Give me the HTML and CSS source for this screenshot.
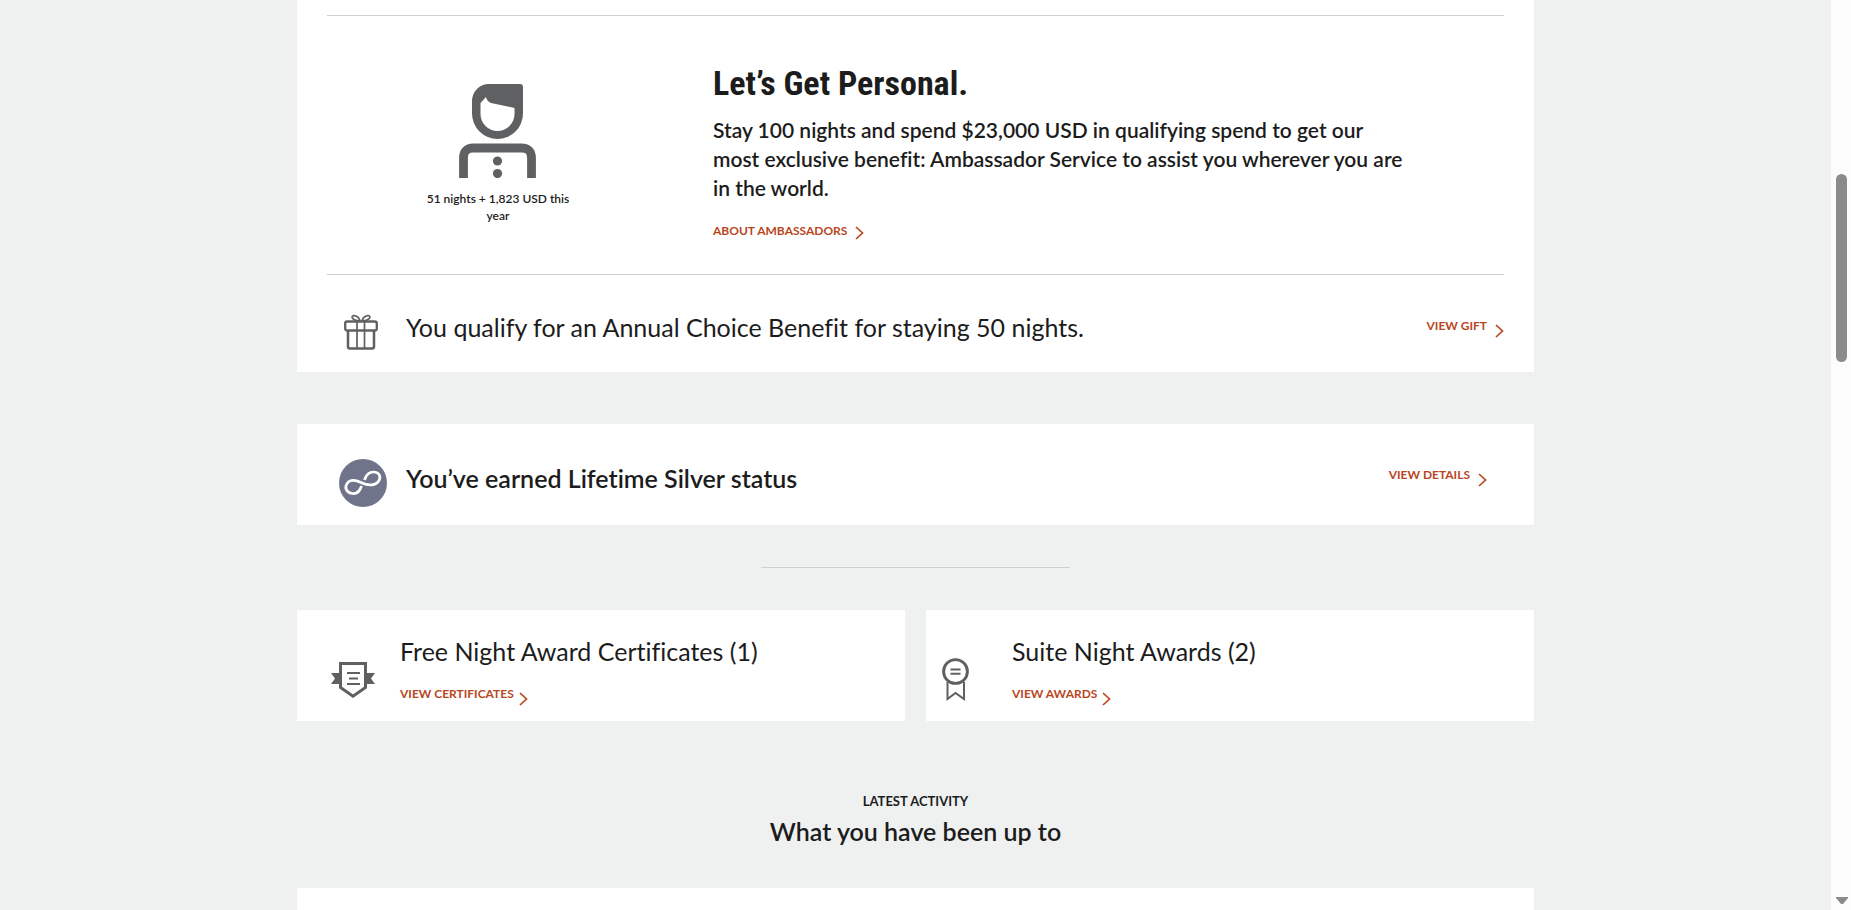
FILE: index.html
```html
<!DOCTYPE html>
<html lang="en">
<head>
<meta charset="utf-8">
<meta name="viewport" content="width=device-width, initial-scale=1">
<title>Member benefits</title>
<link rel="stylesheet" href="styles.css">
</head>
<body>
<svg class="sprite" aria-hidden="true">
  <symbol id="chevron" viewBox="0 0 9 14"><path d="M1 1l6.500 6L1 13" fill="none" stroke="currentColor" stroke-width="1.700"/></symbol>
</svg>
<div class="screen">
  <main class="page">
    <section class="card benefits">
      <div class="ambassador">
        <div class="progress">
          <svg class="person" viewBox="0 0 78 94" aria-hidden="true">
            <path fill="#5f6062" fill-rule="evenodd" d="M30 0H61Q64 0 64 3V29.500A25.500 25.500 0 0 1 13 29.500V17A17 17 0 0 1 30 0ZM27 13L21.500 19V30A17 17 0 0 0 55.500 30V24L32 19Q28 17.500 27 13Z"/>
            <path d="M4.500 94V74Q4.500 64 14.500 64H62.500Q72.500 64 72.500 74V94" fill="none" stroke="#5f6062" stroke-width="8.800"/>
            <circle cx="38.500" cy="77" r="4.600" fill="#5f6062"/><circle cx="38.500" cy="89.500" r="4.600" fill="#5f6062"/>
          </svg>
          <p class="caption">51 nights + 1,823 USD this year</p>
        </div>
        <div class="pitch">
          <h2 class="pitch-title">Let’s Get Personal.</h2>
          <p class="pitch-text">Stay 100 nights and spend $23,000 USD in qualifying spend to get our most exclusive benefit: Ambassador Service to assist you wherever you are in the world.</p>
          <a class="link" href="#ambassadors">ABOUT AMBASSADORS<svg class="chevron"><use href="#chevron"/></svg></a>
        </div>
      </div>
      <div class="gift">
        <svg class="gift-icon" viewBox="0 0 34 36" fill="none" stroke="#5f6062" aria-hidden="true">
          <rect x="1.200" y="7.500" width="31.600" height="9" rx="2" stroke-width="2.300"/>
          <path d="M4 17V32.500Q4 34.500 6 34.500H28Q30 34.500 30 32.500V17" stroke-width="2.500"/>
          <path d="M13 8V34M20.500 8V34" stroke-width="1.700"/>
          <path d="M16 7C12 7 8 5 8 3C9 0 15 2 16 7ZM18 7C22 7 26 5 26 3C25 0 19 2 18 7Z" stroke-width="1.700"/>
        </svg>
        <p class="light-title">You qualify for an Annual Choice Benefit for staying 50 nights.</p>
        <a class="link" href="#gift">VIEW GIFT<svg class="chevron"><use href="#chevron"/></svg></a>
      </div>
    </section>

    <section class="card lifetime">
      <svg class="infinity" viewBox="0 0 48 48" aria-hidden="true">
        <circle cx="24" cy="24" r="24" fill="#70748a"/>
        <path d="M22.500 27C21 32 18 35 13.500 34.500C8 34 5.500 29.500 7.500 25.500C10 20 16 20.500 22 23.500C30 27.500 37 26.500 40 21.500C42.500 17 39.500 13 34.500 13C29.500 13 27 16 25.500 21" fill="none" stroke="#fff" stroke-width="2.700"/>
      </svg>
      <h2 class="title">You’ve earned Lifetime Silver status</h2>
      <a class="link" href="#details">VIEW DETAILS<svg class="chevron"><use href="#chevron"/></svg></a>
    </section>

    <hr class="rule">

    <div class="awards">
      <section class="card award award-certificates">
        <svg class="shield" viewBox="0 0 44 36" aria-hidden="true">
          <path d="M0 11H9V22H0L4 16.500ZM44 11H35V22H44L40 16.500Z" fill="#5f6062"/>
          <path d="M9.500 1.500H34.500V25.500L22 34.200L9.500 25.500Z" fill="#fff" stroke="#5f6062" stroke-width="3"/>
          <path d="M16 11H29M18 16.500H27M16 22H29" stroke="#5f6062" stroke-width="2"/>
        </svg>
        <div class="award-body">
          <h3 class="light-title">Free Night Award Certificates (1)</h3>
          <a class="link link-tight" href="#certificates">VIEW CERTIFICATES<svg class="chevron"><use href="#chevron"/></svg></a>
        </div>
      </section>
      <section class="card award award-suites">
        <svg class="ribbon" viewBox="0 0 28 44" fill="none" stroke="#5f6062" aria-hidden="true">
          <path d="M5.500 24V41L13.500 35L22 41V24" stroke-width="2"/>
          <circle cx="13.500" cy="13.500" r="11.900" fill="#fff" stroke-width="2.900"/>
          <path d="M8.500 11.500H18.500M8.500 15.700H18.500" stroke-width="2"/>
        </svg>
        <div class="award-body">
          <h3 class="light-title">Suite Night Awards (2)</h3>
          <a class="link link-tight" href="#awards">VIEW AWARDS<svg class="chevron"><use href="#chevron"/></svg></a>
        </div>
      </section>
    </div>

    <header class="activity">
      <p class="eyebrow">LATEST ACTIVITY</p>
      <h2 class="title">What you have been up to</h2>
    </header>
    <section class="card activity-card"></section>
  </main>
  <div class="scrollbar" aria-hidden="true">
    <div class="thumb"></div>
    <svg class="arrow" viewBox="0 0 12 8"><path d="M0 0H12V1L7 7H5L0 1Z" fill="#8b8b8b"/></svg>
  </div>
</div>
</body>
</html>
```
FILE: styles.css
```css
* { box-sizing: border-box; }
body {
  margin: 0;
  background: #eff1f1;
  color: #1c1c1c;
  font-family: Lato, "Open Sans", sans-serif;
  font-variant-ligatures: no-common-ligatures;
}
h2, h3, p { margin: 0; font-weight: inherit; }
.sprite { display: none; }
.screen { display: flex; height: 100vh; overflow: hidden; }
.page { flex: 1; padding: 0 297px; }
.card { background: #fff; }

.benefits { padding: 15px 30px 0; }
.ambassador {
  display: grid;
  grid-template-columns: 342px minmax(0, 704px);
  column-gap: 44px;
  border-top: 1px solid #cfcfcf;
  border-bottom: 1px solid #cfcfcf;
}
.progress { display: flex; flex-direction: column; align-items: center; padding-top: 68px; }
.person { width: 78px; height: 94px; }
.caption { width: 154px; margin-top: 12px; font-size: 12px; line-height: 17px; font-weight: 600; text-align: center; }
.pitch { display: flex; flex-direction: column; align-items: flex-start; padding: 46px 0 34px; }
.pitch-title { font: bold 34px/42px "Roboto Condensed", "DejaVu Sans Condensed", sans-serif; }
.pitch-text { max-width: 700px; margin: 11px 0 20px; font-size: 21px; line-height: 29px; font-weight: 600; }

.link {
  display: inline-flex;
  align-items: flex-start;
  gap: 8px;
  height: 18px;
  color: #b9461e;
  font-size: 12px;
  line-height: 18px;
  font-weight: 700;
  text-decoration: none;
  white-space: nowrap;
}
.link-tight { gap: 5px; }
.chevron { flex: none; width: 9px; height: 14px; margin-top: 7px; }
.pitch .chevron { margin-top: 4px; }

.gift { display: flex; align-items: flex-start; height: 97px; padding-top: 36px; }
.gift-icon { width: 34px; height: 36px; margin: 3px 28px 0 17px; }
.gift .link { margin: 6px 0 0 auto; }
.light-title { font-size: 25px; line-height: 32px; font-weight: 400; }
.title { font-size: 25px; line-height: 32px; font-weight: 600; }

.lifetime { display: flex; align-items: flex-start; height: 101px; margin-top: 52px; padding: 35px 47px 0 42px; }
.infinity { width: 48px; height: 48px; margin-right: 19px; }
.lifetime .title { margin-top: 3px; }
.lifetime .link { margin: 7px 0 0 auto; }
.rule { width: 25%; height: 1px; margin: 42px auto; border: 0; background: #cfcfcf; }

.awards { display: grid; grid-template-columns: 1fr 1fr; gap: 21px; }
.award { display: flex; align-items: flex-start; height: 111px; padding-top: 25px; }
.award-body { display: flex; flex-direction: column; align-items: flex-start; gap: 18px; }
.shield { width: 44px; height: 36px; margin: 27px 25px 0 34px; }
.ribbon { width: 28px; height: 44px; margin: 23px 42px 0 16px; }
.activity { padding: 71px 0 41px; text-align: center; }
.eyebrow { margin-bottom: 5px; font-size: 13px; line-height: 18px; font-weight: 700; }
.activity-card { height: 100px; }

.scrollbar {
  display: flex;
  flex-direction: column;
  align-items: center;
  justify-content: space-between;
  width: 20px;
  padding: 174px 0 5px 1px;
  background: #fcfcfc;
}
.thumb { width: 11px; height: 188px; border-radius: 6px; background: #8b8b8b; }
.arrow { width: 12px; height: 8px; }
```
